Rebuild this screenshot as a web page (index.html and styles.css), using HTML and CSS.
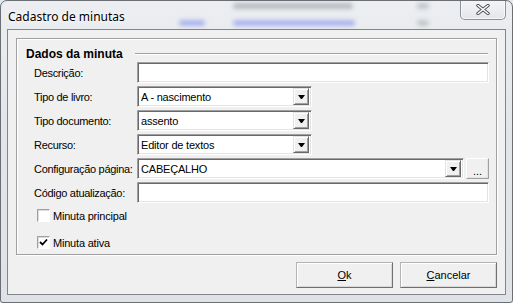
FILE: index.html
```html
<!DOCTYPE html>
<html lang="pt-BR">
<head>
  <meta charset="UTF-8">
  <title>Cadastro de minutas</title>
  <link rel="stylesheet" href="styles.css">
</head>
<body>

  <div class="window">
    <!-- Barra de título com o vidro do Aero (conteúdo borrado atrás) -->
    <div class="titlebar">
      <div class="glass">
        <div class="smudge s1"></div>
        <div class="smudge s2"></div>
        <div class="smudge s3"></div>
        <div class="smudge s4"></div>
        <div class="smudge s5"></div>
      </div>
      <span class="title">Cadastro de minutas</span>
    </div>
    <button class="close" type="button">
      <svg width="14" height="11" viewBox="0 0 14 11">
        <path d="M2 1.5 L12 9.5 M12 1.5 L2 9.5" stroke="#4b4f56" stroke-width="3.4" stroke-linecap="round"/>
        <path d="M2 1.5 L12 9.5 M12 1.5 L2 9.5" stroke="#ffffff" stroke-width="1.6" stroke-linecap="round"/>
      </svg>
    </button>

    <div class="client">
      <div class="group">
        <div class="group-head">
          <span>Dados da minuta</span>
          <div class="bevel"></div>
        </div>

        <div class="fields">
          <label>Descrição:</label>
          <div class="edit"></div>

          <label>Tipo de livro:</label>
          <div class="combo">
            <span class="value">A - nascimento</span>
            <span class="arrow"><svg width="7" height="4" viewBox="0 0 7 4"><polygon points="0,0 7,0 4,4 3,4" fill="#000"/></svg></span>
          </div>

          <label>Tipo documento:</label>
          <div class="combo">
            <span class="value">assento</span>
            <span class="arrow"><svg width="7" height="4" viewBox="0 0 7 4"><polygon points="0,0 7,0 4,4 3,4" fill="#000"/></svg></span>
          </div>

          <label>Recurso:</label>
          <div class="combo">
            <span class="value">Editor de textos</span>
            <span class="arrow"><svg width="7" height="4" viewBox="0 0 7 4"><polygon points="0,0 7,0 4,4 3,4" fill="#000"/></svg></span>
          </div>

          <label>Configuração página:</label>
          <div class="with-button">
            <div class="combo wide">
              <span class="value">CABEÇALHO</span>
              <span class="arrow"><svg width="7" height="4" viewBox="0 0 7 4"><polygon points="0,0 7,0 4,4 3,4" fill="#000"/></svg></span>
            </div>
            <button class="dots" type="button">...</button>
          </div>

          <label>Código atualização:</label>
          <div class="edit"></div>
        </div>

        <div class="checks">
          <div class="check"><span class="box"></span>Minuta principal</div>
          <div class="check">
            <span class="box"><svg width="9" height="9" viewBox="0 0 9 9"><path d="M1 4 L3.5 6.5 L8 1.5" fill="none" stroke="#000" stroke-width="1.8"/></svg></span>
            Minuta ativa
          </div>
        </div>
      </div>

      <div class="actions">
        <button class="btn" type="button"><u>O</u>k</button>
        <button class="btn" type="button"><u>C</u>ancelar</button>
      </div>
    </div>
  </div>

</body>
</html>
```

FILE: styles.css
```css
/* Reset */
* {
  margin: 0;
  padding: 0;
  box-sizing: border-box;
}

body {
  width: 513px;
  height: 303px;
  overflow: hidden;
  background-color: #e4e7eb;
  font-family: "Liberation Sans", Arial, sans-serif;
  font-size: 11px;
  color: #000;
}

/* Janela */
.window {
  position: relative;
  width: 513px;
  height: 303px;
  display: flex;
  flex-direction: column;
  padding: 0 6px 7px;
  border: 1px solid #6b6e73;
  border-radius: 7px 7px 3px 3px;
  background: linear-gradient(#eceef1, #e2e6ea 40%, #dfe3e8);
  overflow: hidden;
}

.titlebar {
  position: relative;
  height: 28px;
  display: flex;
  align-items: center;
}

.glass {
  position: absolute;
  inset: 0;
  overflow: hidden;
}

.smudge {
  position: absolute;
  height: 6px;
  border-radius: 3px;
  filter: blur(2px);
}

.s1 { left: 226px; top: 2px; width: 120px; background-color: #b9bdc3; }
.s2 { left: 172px; top: 19px; width: 26px; background-color: #aab4ef; }
.s3 { left: 226px; top: 19px; width: 122px; background-color: #aab4ef; }
.s4 { left: 410px; top: 2px; width: 12px; background-color: #c2c6cb; }
.s5 { left: 410px; top: 19px; width: 12px; background-color: #c2c6cb; }

.title {
  position: relative;
  padding-left: 1px;
  padding-top: 2px;
  font-family: "Noto Sans", "Open Sans", sans-serif;
  font-size: 12px;
  color: #000;
  text-shadow: 0 0 6px #fff, 0 0 3px #fff;
}

.close {
  position: absolute;
  top: -1px;
  right: 6px;
  width: 46px;
  height: 20px;
  display: flex;
  align-items: center;
  justify-content: center;
  border: 1px solid #8d9096;
  border-top: none;
  border-radius: 0 0 5px 5px;
  background: linear-gradient(#f4f5f7, #e3e6ea);
  box-shadow: inset 0 0 0 1px rgba(255, 255, 255, 0.7);
}

/* Área cliente */
.client {
  flex: 1;
  display: flex;
  flex-direction: column;
  background-color: #f0f0f0;
  border: 1px solid #82868c;
}

.group {
  height: 217px;
  margin: 8px 8px 0;
  border: 1px solid #a0a0a0;
  box-shadow: inset 1px 1px #fff, 1px 1px #fff;
}

.group-head {
  height: 23px;
  padding: 6px 8px 0 9px;
  display: flex;
  align-items: center;
}

.group-head span {
  font-weight: bold;
  font-size: 12px;
}

.bevel {
  flex: 1;
  height: 2px;
  margin-left: 12px;
  border-top: 1px solid #a0a0a0;
  border-bottom: 1px solid #fff;
}

/* Campos */
.fields {
  display: grid;
  grid-template-columns: 103px 1fr;
  grid-auto-rows: 21px;
  row-gap: 3px;
  padding: 0 8px 0 17px;
}

.fields label {
  display: flex;
  align-items: center;
  white-space: nowrap;
  letter-spacing: -0.3px;
}

.edit,
.combo {
  height: 21px;
  background-color: #fff;
  border: 1px solid;
  border-color: #a0a0a0 #fff #fff #a0a0a0;
  box-shadow: inset 1px 1px #696969, inset -1px -1px #e3e3e3;
}

.combo {
  width: 175px;
  display: flex;
  align-items: center;
  padding: 2px;
  letter-spacing: -0.2px;
}

.combo.wide {
  width: 327px;
}

.combo .value {
  flex: 1;
  padding-left: 1px;
}

.arrow {
  width: 16px;
  height: 17px;
  display: flex;
  align-items: center;
  justify-content: center;
  background-color: #f0f0f0;
  border: 1px solid;
  border-color: #e3e3e3 #696969 #696969 #e3e3e3;
  box-shadow: inset 1px 1px #fff, inset -1px -1px #a0a0a0;
}

.with-button {
  display: flex;
  gap: 2px;
}

.dots {
  width: 23px;
  height: 21px;
  padding-top: 4px;
  font-family: "Liberation Sans", Arial, sans-serif;
  font-size: 11px;
  background-color: #f0f0f0;
  border: 1px solid;
  border-color: #fff #a0a0a0 #a0a0a0 #fff;
  box-shadow: inset -1px -1px #e3e3e3;
}

/* Caixas de seleção */
.checks {
  display: flex;
  flex-direction: column;
  gap: 10px;
  margin-top: 4px;
  padding-left: 20px;
  letter-spacing: -0.2px;
}

.check {
  height: 17px;
  display: flex;
  align-items: center;
  gap: 3px;
}

.box {
  width: 13px;
  height: 13px;
  display: flex;
  align-items: center;
  justify-content: center;
  background-color: #fff;
  border: 1px solid;
  border-color: #a0a0a0 #fff #fff #a0a0a0;
  box-shadow: inset 1px 1px #dcdcdc;
}

/* Botões */
.actions {
  display: flex;
  justify-content: flex-end;
  gap: 7px;
  padding: 7px 8px 0;
}

.btn {
  width: 97px;
  height: 26px;
  font-family: "Liberation Sans", Arial, sans-serif;
  font-size: 11px;
  color: #000;
  background-color: #f0f0f0;
  border: 1px solid;
  border-color: #b4b4b4 #6f6f6f #6f6f6f #b4b4b4;
  box-shadow: inset 1px 1px #fff, inset -1px -1px #d8d8d8;
}
```
